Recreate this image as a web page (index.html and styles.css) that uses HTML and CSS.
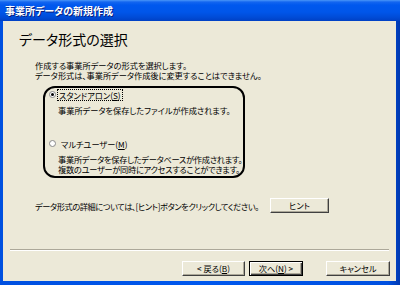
FILE: index.html
```html
<!DOCTYPE html>
<html lang="ja">
<head>
<meta charset="utf-8">
<link rel="stylesheet" href="styles.css">
</head>
<body>
<div class="window">
  <div class="titlebar"><span class="title">事業所データの新規作成</span></div>
  <div class="client">
    <h1 class="heading">データ形式の選択</h1>
    <div class="intro">
      <p>作成する事業所データの形式を選択します。</p>
      <p>データ形式は、事業所データ作成後に変更することはできません。</p>
    </div>
    <div class="optbox">
      <div class="opt opt-first">
        <span class="radio checked"></span>
        <span class="label focus">スタンドアロン(<u>S</u>)</span>
      </div>
      <p class="desc desc-first">事業所データを保存したファイルが作成されます。</p>
      <div class="opt opt-second">
        <span class="radio"></span>
        <span class="label">マルチユーザー(<u>M</u>)</span>
      </div>
      <p class="desc desc-second">事業所データを保存したデータベースが作成されます。<br>複数のユーザーが同時にアクセスすることができます。</p>
    </div>
    <div class="hintrow">
      <span class="hinttext">データ形式の詳細については、[ヒント]ボタンをクリックしてください。</span>
      <button class="btn btn-hint">ヒント</button>
    </div>
    <div class="sep"></div>
    <div class="buttons">
      <button class="btn btn-back">&lt; 戻る(<u>B</u>)</button>
      <button class="btn btn-next">次へ(<u>N</u>) &gt;</button>
      <button class="btn btn-cancel">キャンセル</button>
    </div>
  </div>
</div>
</body>
</html>
```
FILE: styles.css
```css
* { box-sizing: border-box; }
html, body { margin: 0; padding: 0; background: #ECE9D8; }
body {
  font-family: "Noto Sans CJK JP", "Noto Sans", sans-serif;
  font-feature-settings: "palt";
  color: #000;
}
.window {
  width: 400px;
  height: 285px;
  display: flex;
  flex-direction: column;
  background: linear-gradient(to right, #0050E0 0, #0058EE 50%, #0050E0 97%, #0038B0 100%);
}
.titlebar {
  height: 21px;
  flex: none;
  display: flex;
  align-items: center;
  padding-left: 5px;
  background: linear-gradient(to bottom, #4A96F8 0, #1466F0 2px, #0058EE 5px, #0056EA 12px, #004CD8 17px, #0040C4 21px);
}
.title {
  color: #fff;
  font-size: 10px;
  font-weight: bold;
  line-height: 12px;
  text-shadow: 1px 1px 0 #0A1E7A;
  margin-top: 1px;
}
.client {
  flex: 1;
  margin: 0 4px 4px 3px;
  background: #ECE9D8;
  display: flex;
  flex-direction: column;
  font-size: 8.2px;
  line-height: 10px;
}
.heading {
  margin: 10px 0 0 16px;
  font-size: 14px;
  line-height: 17px;
  font-weight: normal;
}
.intro {
  margin: 12px 0 0 32px;
}
.intro p { margin: 0; line-height: 10px; white-space: nowrap; }
.optbox {
  margin: 6px 0 0 40px;
  width: 202px;
  border: 2px solid #000;
  border-radius: 12px;
  padding: 1px 0 2px 4px;
}
.opt {
  display: flex;
  align-items: center;
  height: 11px;
}
.opt-second { margin-top: 23px; }
.radio {
  width: 7px;
  height: 7px;
  border-radius: 50%;
  background: #fff;
  border: 1px solid #8a8a8a;
  display: flex;
  align-items: center;
  justify-content: center;
  flex: none;
}
.radio.checked::after {
  content: "";
  width: 3px;
  height: 3px;
  border-radius: 50%;
  background: #000;
}
.label {
  margin-left: 2px;
  padding: 0 1px;
  line-height: 10px;
  height: 10px;
  white-space: nowrap;
}
.opt-second .label { margin-left: 4px; }
.focus { outline: 1px dotted #000; outline-offset: 0; }
.desc { margin: 5px 0 0 9px; line-height: 10px; white-space: nowrap; }
.desc-second { margin-top: 5px; letter-spacing: -0.25px; }
.hintrow {
  margin: 20px 0 0 32px;
  display: flex;
  align-items: center;
  height: 15px;
}
.hinttext { width: 235px; flex: none; white-space: nowrap; letter-spacing: -0.4px; }
.btn {
  font-family: inherit;
  font-feature-settings: "palt";
  font-size: 8.2px;
  line-height: 9px;
  color: #000;
  background: #ECE9D8;
  height: 15px;
  padding: 0;
  border: 1px solid;
  border-color: #fff #404040 #404040 #fff;
  box-shadow: inset -1px -1px 0 #ACA899;
  border-radius: 0;
  white-space: nowrap;
}
.btn-hint { width: 59px; flex: none; }
.sep {
  margin: 36px 7px 0 7px;
  border-top: 1px solid #ACA899;
  border-bottom: 1px solid #fff;
}
.buttons {
  margin-top: 10px;
  display: flex;
  justify-content: flex-end;
  padding-right: 6px;
}
.btn-back { width: 63px; }
.btn-next {
  width: 54px;
  margin-left: 4px;
  border: 1px solid #000;
  box-shadow: inset 1px 1px 0 #fff, inset -1px -1px 0 #404040, inset -2px -2px 0 #ACA899;
}
.btn-cancel { width: 64px; margin-left: 23px; }
```
